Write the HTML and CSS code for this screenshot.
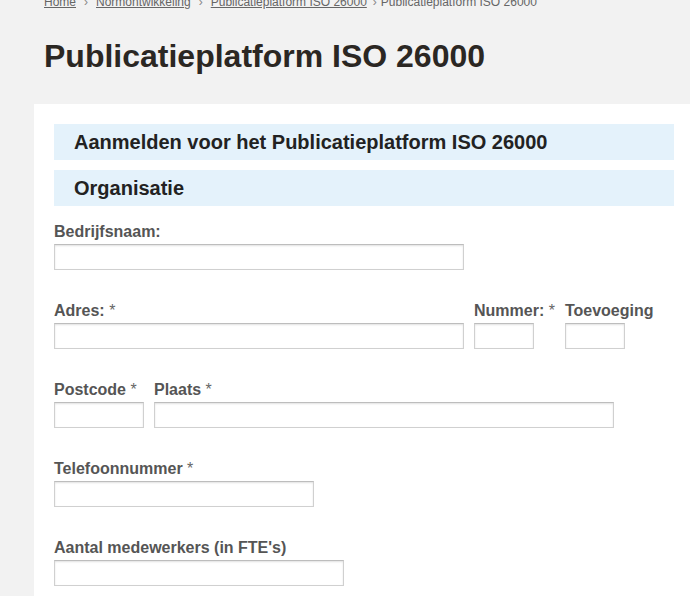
FILE: index.html
```html
<!DOCTYPE html>
<html lang="nl">
<head>
  <meta charset="UTF-8" />
  <meta name="viewport" content="width=device-width, initial-scale=1.0"/>
  <title>Publicatieplatform ISO 26000</title>
  <link rel="stylesheet" href="styles.css">
</head>
<body>
  <!-- Breadcrumb -->
  <div class="breadcrumb">
    <a href="#">Home</a><span class="sep">›</span><a href="#">Normontwikkeling</a><span class="sep">›</span><a href="#">Publicatieplatform ISO 26000</a><span class="sep last">›</span><span class="current">Publicatieplatform ISO 26000</span>
  </div>

  <h1 class="page-title">Publicatieplatform ISO 26000</h1>

  <!-- Form panel -->
  <div class="panel">
    <h2 class="block-title">Aanmelden voor het Publicatieplatform ISO 26000</h2>
    <h2 class="block-title">Organisatie</h2>

    <div class="form-row">
      <div class="field">
        <label>Bedrijfsnaam:</label>
        <input type="text" class="w-410">
      </div>
    </div>

    <div class="form-row">
      <div class="field">
        <label>Adres: <span class="req">*</span></label>
        <input type="text" class="w-410">
      </div>
      <div class="field">
        <label>Nummer: <span class="req">*</span></label>
        <input type="text" class="w-60">
      </div>
      <div class="field">
        <label>Toevoeging</label>
        <input type="text" class="w-60">
      </div>
    </div>

    <div class="form-row">
      <div class="field">
        <label>Postcode <span class="req">*</span></label>
        <input type="text" class="w-90">
      </div>
      <div class="field">
        <label>Plaats <span class="req">*</span></label>
        <input type="text" class="w-460">
      </div>
    </div>

    <div class="form-row">
      <div class="field">
        <label>Telefoonnummer <span class="req">*</span></label>
        <input type="text" class="w-260">
      </div>
    </div>

    <div class="form-row">
      <div class="field">
        <label>Aantal medewerkers (in FTE's)</label>
        <input type="text" class="w-290">
      </div>
    </div>
  </div>
</body>
</html>
```

FILE: styles.css
```css
body {
  font-family: "Liberation Sans", Arial, sans-serif;
  background: #f2f2f2;
  color: #333;
  margin: 0;
  overflow: hidden;
}
.breadcrumb {
  margin: -5px 0 0 44px;
  font-size: 12px;
  line-height: 14px;
  color: #666;
  white-space: nowrap;
}
.breadcrumb a {
  color: #666;
  text-decoration: underline;
}
.breadcrumb .sep {
  margin: 0 8px;
  color: #888;
}
.breadcrumb .sep.last {
  margin: 0 4px 0 6px;
}
.page-title {
  margin: 29px 0 30px 44px;
  font-size: 32px;
  line-height: 36px;
  font-weight: bold;
  color: #2b2723;
}
.panel {
  background: #fff;
  margin-left: 34px;
  padding: 20px 16px 40px 20px;
  min-height: 600px;
}
.block-title {
  margin: 0 0 10px;
  padding: 8px 20px 8px;
  background: #e4f2fb;
  font-size: 20px;
  line-height: 20px;
  font-weight: bold;
  color: #222;
}
.form-row {
  display: flex;
  gap: 10px;
  margin-top: 31px;
}
.block-title + .block-title + .form-row {
  margin-top: 16px;
}
.field {
  display: flex;
  flex-direction: column;
}
.field label {
  font-size: 16px;
  line-height: 20px;
  font-weight: bold;
  color: #555;
  margin-bottom: 2px;
  white-space: nowrap;
}
.field .req {
  font-weight: normal;
  color: #666;
}
.field input {
  box-sizing: border-box;
  height: 26px;
  margin: 0;
  border: 1px solid #d0d0d0;
  border-top-color: #bdbdbd;
  box-shadow: inset 0 1px 2px rgba(0,0,0,0.12);
  background: #fff;
  padding: 2px 4px;
}
.w-60 { width: 60px; }
.w-90 { width: 90px; }
.w-260 { width: 260px; }
.w-290 { width: 290px; }
.w-410 { width: 410px; }
.w-460 { width: 460px; }
```
